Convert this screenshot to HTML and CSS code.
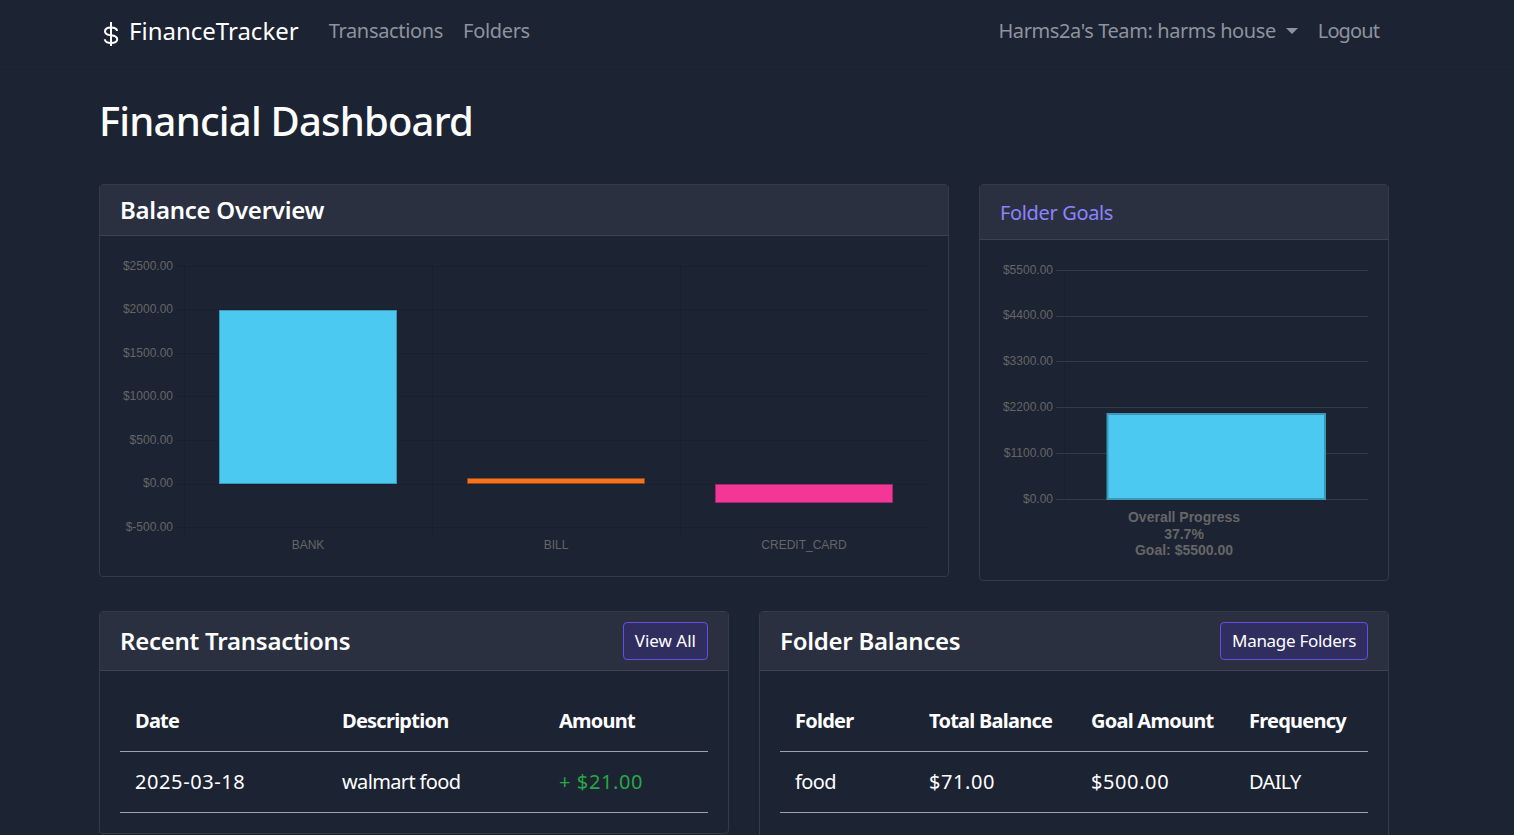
FILE: index.html
```html
<!DOCTYPE html>
<html lang="en">

<head>
    <meta charset="UTF-8">
    <title>Financial Dashboard</title>
    <link rel="stylesheet" href="styles.css">
</head>

<body>
    <!-- top navigation -->
    <nav class="navbar">
        <div class="navbar-inner">
            <a class="brand" href="#">
                <svg class="brand-icon" width="16" height="24" viewBox="0 0 16 24" fill="none" stroke="#fff" stroke-width="2">
                    <path d="M8 0V24" />
                    <path d="M14 9C14 6.800 11.500 5.500 8 5.500C4.500 5.500 2 7 2 9.500C2 12 4.500 12.900 8 13.300C11.500 13.700 14.200 14.800 14.200 17.300C14.200 19.700 11.500 21 8 21C4.500 21 1.800 19.700 1.800 17.300" />
                </svg>
                <span>FinanceTracker</span>
            </a>
            <a class="nav-link" href="#">Transactions</a>
            <a class="nav-link" href="#">Folders</a>
            <a class="nav-link team-link" href="#">Harms2a's Team: harms house<span class="caret"></span></a>
            <a class="nav-link logout-link" href="#">Logout</a>
        </div>
    </nav>

    <main class="container">
        <h1 class="page-title">Financial Dashboard</h1>

        <!-- charts -->
        <div class="row row-charts">
            <section class="card">
                <div class="card-header">
                    <h2 class="card-title">Balance Overview</h2>
                </div>
                <div class="card-body">
                    <svg class="chart" width="808" height="300" viewBox="120 256 808 300">
                        <g class="grid-dim">
                            <path d="M176 266.500H928M176 309.500H928M176 353.500H928M176 396.500H928M176 440.500H928M176 484.500H928M176 527.500H928" />
                            <path d="M184.500 266V535M432.500 266V535M680.500 266V535" />
                        </g>
                        <rect class="bar-blue" x="219.500" y="310.500" width="177" height="173" />
                        <rect class="bar-orange" x="467.500" y="478.500" width="177" height="5" />
                        <rect class="bar-pink" x="715.500" y="484.500" width="177" height="18" />
                        <g class="tick-y">
                            <text x="173" y="270">$2500.00</text>
                            <text x="173" y="313">$2000.00</text>
                            <text x="173" y="357">$1500.00</text>
                            <text x="173" y="400">$1000.00</text>
                            <text x="173" y="444">$500.00</text>
                            <text x="173" y="487">$0.00</text>
                            <text x="173" y="531">$-500.00</text>
                        </g>
                        <g class="tick-x">
                            <text x="308" y="549">BANK</text>
                            <text x="556" y="549">BILL</text>
                            <text x="804" y="549">CREDIT_CARD</text>
                        </g>
                    </svg>
                </div>
            </section>

            <section class="card">
                <div class="card-header card-header-goals">
                    <h2 class="card-title-link">Folder Goals</h2>
                </div>
                <div class="card-body">
                    <svg class="chart" width="368" height="300" viewBox="1000 260 368 300">
                        <path class="grid-dim" d="M1064.500 270V500" />
                        <path class="grid-line" d="M1056 270.500H1368M1056 316.500H1368M1056 361.500H1368M1056 407.500H1368M1056 453.500H1368M1056 499.500H1368" />
                        <rect class="bar-blue bar-thick" x="1107.500" y="414" width="217.500" height="85" />
                        <g class="tick-y">
                            <text x="1053" y="274">$5500.00</text>
                            <text x="1053" y="319">$4400.00</text>
                            <text x="1053" y="365">$3300.00</text>
                            <text x="1053" y="411">$2200.00</text>
                            <text x="1053" y="457">$1100.00</text>
                            <text x="1053" y="503">$0.00</text>
                        </g>
                        <g class="tick-x tick-bold">
                            <text x="1184" y="522">Overall Progress</text>
                            <text x="1184" y="539">37.7%</text>
                            <text x="1184" y="555">Goal: $5500.00</text>
                        </g>
                    </svg>
                </div>
            </section>
        </div>

        <!-- tables -->
        <div class="row row-tables">
            <section class="card">
                <div class="card-header card-header-action">
                    <h2 class="card-title">Recent Transactions</h2>
                    <a class="btn btn-short" href="#">View All</a>
                </div>
                <div class="card-body">
                    <table class="table">
                        <colgroup>
                            <col class="col-date">
                            <col class="col-desc">
                            <col>
                        </colgroup>
                        <thead>
                            <tr>
                                <th>Date</th>
                                <th>Description</th>
                                <th>Amount</th>
                            </tr>
                        </thead>
                        <tbody>
                            <tr>
                                <td class="num">2025-03-18</td>
                                <td>walmart food</td>
                                <td class="num amount-in">+ $21.00</td>
                            </tr>
                        </tbody>
                    </table>
                </div>
            </section>

            <section class="card">
                <div class="card-header card-header-action">
                    <h2 class="card-title">Folder Balances</h2>
                    <a class="btn" href="#">Manage Folders</a>
                </div>
                <div class="card-body">
                    <table class="table">
                        <colgroup>
                            <col class="col-folder">
                            <col class="col-total">
                            <col class="col-goal">
                            <col>
                        </colgroup>
                        <thead>
                            <tr>
                                <th>Folder</th>
                                <th>Total Balance</th>
                                <th>Goal Amount</th>
                                <th>Frequency</th>
                            </tr>
                        </thead>
                        <tbody>
                            <tr>
                                <td>food</td>
                                <td class="num">$71.00</td>
                                <td class="num">$500.00</td>
                                <td>DAILY</td>
                            </tr>
                            <tr>
                                <td></td>
                                <td class="num">$0.00</td>
                                <td class="num">$0.00</td>
                                <td></td>
                            </tr>
                        </tbody>
                    </table>
                </div>
            </section>
        </div>
    </main>
</body>

</html>
```

FILE: styles.css
```css
* {
    box-sizing: border-box;
}

html {
    overflow: hidden;
}

body {
    font-family: "Noto Sans", Arial, sans-serif;
    background-color: #1c2333;
    color: #fff;
    margin: 0;
    padding: 0;
    font-size: 20px;
    line-height: 30px;
}

a {
    text-decoration: none;
}

/* navbar */
.navbar {
    height: 67px;
    border-bottom: 1px solid #1f2636;
}

.navbar-inner {
    display: flex;
    align-items: center;
    height: 62px;
    width: 1290px;
    margin-left: 99px;
    padding-left: 4px;
}

.brand {
    display: flex;
    align-items: center;
    gap: 10px;
    color: #fff;
    font-size: 24px;
    margin-right: 20px;
}

.brand-icon {
    margin-top: 6px;
}

.nav-link {
    color: #8e939d;
    padding: 0 10px;
    letter-spacing: -0.33px;
}

.team-link {
    margin-left: auto;
    letter-spacing: -0.4px;
}

.logout-link {
    letter-spacing: -0.9px;
}

.caret {
    display: inline-block;
    margin-left: 10px;
    vertical-align: 4px;
    border-top: 6px solid;
    border-left: 6px solid transparent;
    border-right: 6px solid transparent;
}

/* page */
.container {
    width: 1290px;
    margin-left: 99px;
}

.page-title {
    font-size: 40px;
    line-height: 48px;
    font-weight: 500;
    letter-spacing: -0.8px;
    margin: 30px 0 39px;
}

.row {
    display: grid;
    gap: 30px;
    align-items: start;
    margin-bottom: 30px;
}

.row-charts {
    grid-template-columns: 850px 410px;
}

.row-tables {
    grid-template-columns: 630px 630px;
}

/* cards */
.card {
    border: 1px solid #333a4a;
    border-radius: 4px;
    overflow: hidden;
}

.card-header {
    display: flex;
    align-items: center;
    height: 51px;
    padding: 0 20px;
    background-color: #2a3040;
    border-bottom: 1px solid #3c4353;
}

.card-header-goals {
    height: 55px;
    padding-top: 2px;
}

.card-header-action {
    justify-content: space-between;
    height: 59px;
}

.card-title {
    font-size: 24px;
    font-weight: 600;
    letter-spacing: -0.25px;
    margin: 0;
}

.card-title-link {
    color: #8a84ff;
    font-size: 20px;
    font-weight: 400;
    letter-spacing: -0.35px;
    margin: 0;
}

.card-body {
    padding: 20px;
}

.btn {
    color: #fff;
    font-size: 17px;
    line-height: 26px;
    letter-spacing: -0.3px;
    padding: 5px 11px;
    background-color: #302d5f;
    border: 1px solid #6152de;
    border-radius: 4px;
}

.btn-short {
    letter-spacing: 0;
}

/* charts */
.chart {
    display: block;
}

.chart text {
    font-family: "Liberation Sans", Arial, sans-serif;
    font-size: 12px;
    fill: #666;
}

.tick-y text {
    text-anchor: end;
}

.tick-x text {
    text-anchor: middle;
}

.chart .tick-bold text {
    font-weight: bold;
    font-size: 14px;
}

.grid-dim {
    fill: none;
    stroke: rgba(0, 0, 0, 0.1);
    stroke-width: 1;
}

.grid-line {
    fill: none;
    stroke: #333a49;
    stroke-width: 1;
}

.bar-blue {
    fill: #4cc9f0;
    stroke: #3c98b8;
    stroke-width: 1;
}

.bar-thick {
    stroke-width: 2;
}

.bar-orange {
    fill: #f97316;
    stroke: #8a4a24;
    stroke-width: 1;
}

.bar-pink {
    fill: #f43696;
    stroke: #a02a72;
    stroke-width: 1;
}

/* tables */
.table {
    width: 100%;
    border-collapse: collapse;
    table-layout: fixed;
}

.table th,
.table td {
    text-align: left;
    padding: 15px;
    height: 61px;
    letter-spacing: -0.65px;
    border-bottom: 1px solid #9da2ae;
    white-space: nowrap;
}

.table th {
    height: 60px;
    font-weight: 700;
    letter-spacing: -0.75px;
}

.table .num {
    letter-spacing: 0.6px;
}

.col-date {
    width: 207px;
}

.col-desc {
    width: 217px;
}

.col-folder {
    width: 134px;
}

.col-total {
    width: 162px;
}

.col-goal {
    width: 158px;
}

.amount-in {
    color: #28a745;
}
```
